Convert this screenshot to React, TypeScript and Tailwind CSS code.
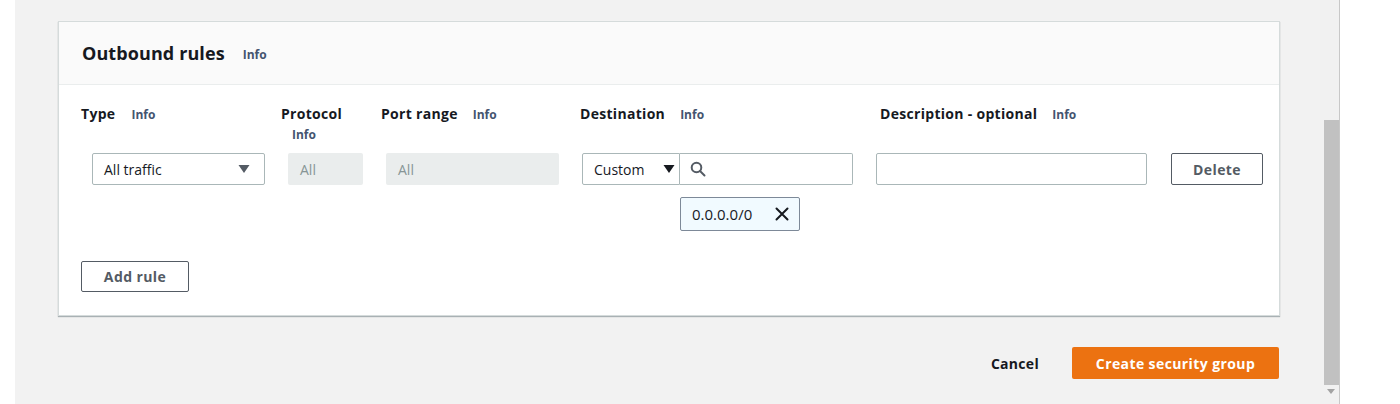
import React from "react";

const font = { fontFamily: '"Open Sans", "Noto Sans", Arial, sans-serif' };

function Info({ className = "" }: { className?: string }) {
  return <span className={`text-[12px] font-bold text-[#44546f] ${className}`}>Info</span>;
}

function Caret({ color = "#16191f" }: { color?: string }) {
  return (
    <svg width="12" height="10" viewBox="0 0 12 10">
      <path d="M0.5 1 L11.5 1 L6 9 Z" fill={color} />
    </svg>
  );
}

export default function App() {
  return (
    <div className="w-[1400px] h-[404px] flex bg-white overflow-hidden" style={font}>
      <div className="w-[15px] h-full bg-white" />
      <div className="w-[1305px] h-full bg-[#f2f2f2] pl-[43px] pt-[21px]">
        {/* Card */}
        <div className="w-[1222px] bg-white border border-[#d5dbdb] shadow-[0_1px_1px_0_rgba(0,28,36,0.3)]">
          <div className="h-[63px] bg-[#fafafa] border-b border-[#eaeded] flex items-center pl-[23px]">
            <span className="text-[18px] font-bold text-[#16191f] tracking-[0.1px]">Outbound rules</span>
            <Info className="ml-[18px] mt-[3px]" />
          </div>
          <div className="pl-[22px] pt-[20px] pb-[23px]">
            {/* labels */}
            <div className="flex items-start text-[14px] font-bold text-[#16191f] leading-[18px] tracking-[0.3px]">
              <div className="w-[200px] flex items-baseline">
                <span>Type</span>
                <Info className="ml-[16px] tracking-normal" />
              </div>
              <div className="w-[100px] flex flex-col">
                <span>Protocol</span>
                <Info className="ml-[11px] mt-[3px] tracking-normal" />
              </div>
              <div className="w-[199px] flex items-baseline">
                <span>Port range</span>
                <Info className="ml-[15px] tracking-normal" />
              </div>
              <div className="w-[300px] flex items-baseline">
                <span>Destination</span>
                <Info className="ml-[15px] tracking-normal" />
              </div>
              <div className="flex items-baseline">
                <span>Description - optional</span>
                <Info className="ml-[15px] tracking-normal" />
              </div>
            </div>
            {/* inputs */}
            <div className="flex items-start gap-[23px] ml-[11px] mt-[9px] text-[14px] text-[#16191f]">
              <div className="w-[173px] h-[32px] border border-[#aab7b8] rounded-[2px] flex items-center justify-between pl-[11px] pr-[14px]">
                <span>All traffic</span>
                <Caret color="#545b64" />
              </div>
              <div className="w-[75px] h-[32px] bg-[#eaeded] rounded-[2px] flex items-center pl-[12px] text-[#879596]">
                All
              </div>
              <div className="w-[173px] h-[32px] bg-[#eaeded] rounded-[2px] flex items-center pl-[12px] text-[#879596]">
                All
              </div>
              <div className="w-[271px] flex flex-col">
                <div className="h-[32px] flex">
                  <div className="w-[98px] h-full border border-[#aab7b8] rounded-l-[2px] flex items-center justify-between pl-[11px] pr-[4px]">
                    <span>Custom</span>
                    <Caret />
                  </div>
                  <div className="flex-1 h-full border border-l-0 border-[#aab7b8] rounded-r-[2px] flex items-center pl-[10px]">
                    <svg width="16" height="16" viewBox="0 0 16 16" fill="none" stroke="#545b64" strokeWidth="2">
                      <circle cx="6.5" cy="6.5" r="4.8" />
                      <path d="M10 10 L14.5 14.5" strokeLinecap="round" />
                    </svg>
                  </div>
                </div>
                <div className="ml-[98px] mt-[12px] w-[120px] h-[34px] bg-[#f1faff] border border-[#7d8998] rounded-[2px] flex items-center justify-between pl-[11px] pr-[10px]">
                  <span className="text-[15px]">0.0.0.0/0</span>
                  <svg width="14" height="14" viewBox="0 0 14 14" stroke="#16191f" strokeWidth="2" strokeLinecap="round">
                    <path d="M1.5 1.5 L12.5 12.5 M12.5 1.5 L1.5 12.5" />
                  </svg>
                </div>
              </div>
              <div className="w-[271px] h-[32px] border border-[#aab7b8] rounded-[2px]" />
              <button className="ml-[1px] w-[92px] h-[32px] border border-[#545b64] rounded-[2px] bg-white font-bold text-[#545b64] text-[14px] tracking-[0.4px] flex items-center justify-center">
                Delete
              </button>
            </div>
            <div className="mt-[30px]">
              <button className="w-[108px] h-[31px] border border-[#545b64] rounded-[2px] bg-white font-bold text-[#545b64] text-[14px] tracking-[0.4px] flex items-center justify-center">
                Add rule
              </button>
            </div>
          </div>
        </div>
        {/* footer */}
        <div className="w-[1222px] flex justify-end items-center mt-[31px] pr-[1px]">
          <button className="font-bold text-[14px] text-[#16191f] tracking-[0.3px] mr-[33px]">Cancel</button>
          <button className="w-[207px] h-[32px] bg-[#ec7211] rounded-[2px] text-white font-bold text-[14px] tracking-[0.4px] flex items-center justify-center">
            Create security group
          </button>
        </div>
      </div>
      {/* scrollbar */}
      <div className="w-[20px] h-full bg-[#f1f1f1] border-r border-[#c8c8c8] flex flex-col items-center">
        <div className="mt-[120px] w-[15px] h-[265px] bg-[#c1c1c1] ml-[3px]" />
        <div className="mt-[4px] ml-[2px]">
          <svg width="8" height="5" viewBox="0 0 8 5">
            <path d="M0 0 L8 0 L4 5 Z" fill="#a3a3a3" />
          </svg>
        </div>
      </div>
      <div className="flex-1 bg-white" />
    </div>
  );
}
